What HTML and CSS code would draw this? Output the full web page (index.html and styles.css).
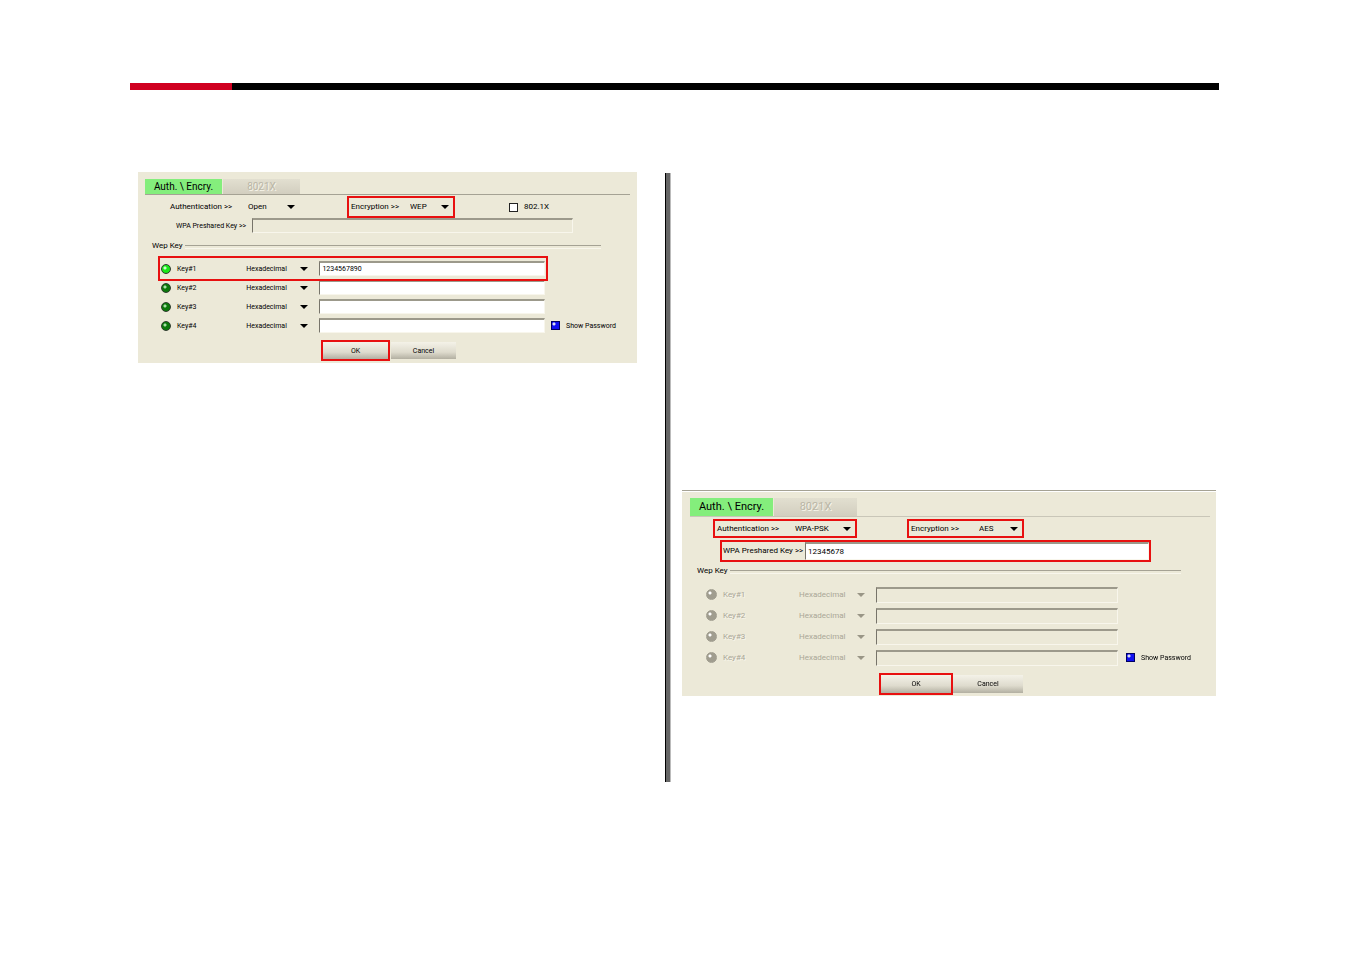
FILE: index.html
```html
<!DOCTYPE html>
<html lang="en">
<head>
  <meta charset="UTF-8" />
  <meta name="viewport" content="width=device-width, initial-scale=1" />
  <title>Auth. \ Encry.</title>
  <link rel="stylesheet" href="styles.css">
</head>
<body>
  <header class="rule"></header>

  <main class="columns">
    <form class="panel wep">
      <nav class="tabs">
        <button type="button" class="tab active">Auth. \ Encry.</button>
        <button type="button" class="tab" disabled>8021X</button>
      </nav>

      <div class="options">
        <div class="field auth">
          <label for="wep-auth">Authentication &gt;&gt;</label>
          <select id="wep-auth"><option>Open</option></select>
        </div>
        <div class="field enc marked">
          <label for="wep-enc">Encryption &gt;&gt;</label>
          <select id="wep-enc"><option>WEP</option></select>
        </div>
        <label class="check"><input type="checkbox"> 802.1X</label>
      </div>

      <div class="psk-row">
        <label for="wep-psk">WPA Preshared Key &gt;&gt;</label>
        <input type="text" id="wep-psk" disabled>
      </div>

      <fieldset>
        <legend>Wep Key</legend>
        <div class="keys">
          <div class="key-list">
            <div class="key marked">
              <label><input type="radio" name="wep-key" checked> Key#1</label>
              <select aria-label="Key 1 format"><option>Hexadecimal</option></select>
              <input type="text" aria-label="Key 1" value="1234567890">
            </div>
            <div class="key">
              <label><input type="radio" name="wep-key"> Key#2</label>
              <select aria-label="Key 2 format"><option>Hexadecimal</option></select>
              <input type="text" aria-label="Key 2">
            </div>
            <div class="key">
              <label><input type="radio" name="wep-key"> Key#3</label>
              <select aria-label="Key 3 format"><option>Hexadecimal</option></select>
              <input type="text" aria-label="Key 3">
            </div>
            <div class="key">
              <label><input type="radio" name="wep-key"> Key#4</label>
              <select aria-label="Key 4 format"><option>Hexadecimal</option></select>
              <input type="text" aria-label="Key 4">
            </div>
          </div>
          <label class="check"><input type="checkbox" checked> Show Password</label>
        </div>
      </fieldset>

      <div class="actions">
        <button type="button" class="marked">OK</button>
        <button type="button">Cancel</button>
      </div>
    </form>

    <div class="divider"></div>

    <form class="panel wpa">
      <nav class="tabs">
        <button type="button" class="tab active">Auth. \ Encry.</button>
        <button type="button" class="tab" disabled>8021X</button>
      </nav>

      <div class="options">
        <div class="field auth marked">
          <label for="wpa-auth">Authentication &gt;&gt;</label>
          <select id="wpa-auth"><option>WPA-PSK</option></select>
        </div>
        <div class="field enc marked">
          <label for="wpa-enc">Encryption &gt;&gt;</label>
          <select id="wpa-enc"><option>AES</option></select>
        </div>
      </div>

      <div class="psk-row marked">
        <label for="wpa-psk">WPA Preshared Key &gt;&gt;</label>
        <input type="text" id="wpa-psk" value="12345678" autofocus>
      </div>

      <fieldset>
        <legend>Wep Key</legend>
        <div class="keys">
          <div class="key-list">
            <div class="key off">
              <label><input type="radio" name="wpa-key" disabled> Key#1</label>
              <select aria-label="Key 1 format" disabled><option>Hexadecimal</option></select>
              <input type="text" aria-label="Key 1" disabled>
            </div>
            <div class="key off">
              <label><input type="radio" name="wpa-key" disabled> Key#2</label>
              <select aria-label="Key 2 format" disabled><option>Hexadecimal</option></select>
              <input type="text" aria-label="Key 2" disabled>
            </div>
            <div class="key off">
              <label><input type="radio" name="wpa-key" disabled> Key#3</label>
              <select aria-label="Key 3 format" disabled><option>Hexadecimal</option></select>
              <input type="text" aria-label="Key 3" disabled>
            </div>
            <div class="key off">
              <label><input type="radio" name="wpa-key" disabled> Key#4</label>
              <select aria-label="Key 4 format" disabled><option>Hexadecimal</option></select>
              <input type="text" aria-label="Key 4" disabled>
            </div>
          </div>
          <label class="check"><input type="checkbox" checked> Show Password</label>
        </div>
      </fieldset>

      <div class="actions">
        <button type="button" class="marked">OK</button>
        <button type="button">Cancel</button>
      </div>
    </form>
  </main>
</body>
</html>
```
FILE: styles.css
```css
* {
  margin: 0;
  padding: 0;
  box-sizing: border-box;
}

body {
  background: #fff;
  color: #000;
  font-family: Roboto, "Liberation Sans", sans-serif;
  padding: 83px 131px 0 130px;
}

.rule {
  height: 7px;
  background: linear-gradient(to right, #d00020 102px, #000 102px);
}

.columns {
  display: grid;
  grid-template-columns: 499fr 34px 545fr;
  align-items: start;
  padding: 82px 3px 0 8px;
}

.divider {
  width: 6px;
  height: 609px;
  margin: 1px 0 0 28px;
  background: #666;
  border-left: 1px solid #000;
  border-right: 1px solid #bbb;
}

.panel {
  background: #ece9d8;
  padding: 7px 7px 4px;
  font-size: 8px;
  line-height: 10px;
}

.panel input,
.panel select,
.panel button {
  font: inherit;
  color: inherit;
  border-radius: 0;
}

.marked {
  outline: 2px solid #e81010;
}

/* tabs */
.tabs {
  display: flex;
  gap: 1px;
  border-bottom: 1px solid #a5a294;
}

.panel .tab {
  width: 77px;
  height: 15px;
  border: 0;
  font-size: 10px;
  line-height: 14px;
  background: linear-gradient(#e2dfd0, #d2cebf);
  color: #bab6a6;
  text-shadow: 1px 1px 0 #f7f5ea;
}

.panel .tab.active {
  background: #84ee7c;
  color: #000;
  text-shadow: none;
}

/* authentication / encryption row */
.options {
  display: grid;
  grid-template-columns: 131fr 104fr 127fr;
  column-gap: 50px;
  height: 18px;
  margin: 3px 0 2px 23px;
}

.field {
  display: flex;
  align-items: center;
  justify-content: space-between;
  padding: 0 4px 0 2px;
}

.check {
  display: flex;
  align-items: center;
  gap: 6px;
  padding-left: 6px;
  white-space: nowrap;
}

select {
  appearance: none;
  border: 0;
  height: 12px;
  background: url("data:image/svg+xml,%3Csvg xmlns='http://www.w3.org/2000/svg' width='8' height='4'%3E%3Cpath d='M0 0h8L4 4z' fill='%23000'/%3E%3C/svg%3E") no-repeat right center;
}

select:disabled {
  opacity: 1;
  background-image: url("data:image/svg+xml,%3Csvg xmlns='http://www.w3.org/2000/svg' width='8' height='4'%3E%3Cpath d='M0 0h8L4 4z' fill='%23999686'/%3E%3C/svg%3E");
}

.auth select {
  width: 47px;
}

.enc select {
  width: 39px;
}

input[type="text"] {
  width: 100%;
  min-width: 0;
  height: 15px;
  padding: 0 2px;
  background: #fff;
  border: 1px solid #f8f6ec;
  border-top: 2px solid #9c998b;
  border-left: 1px solid #77746a;
  outline: none;
}

input[type="text"]:disabled {
  background: #ece9d8;
}

input[type="checkbox"],
input[type="radio"] {
  appearance: none;
  flex: none;
}

input[type="checkbox"] {
  width: 9px;
  height: 9px;
  background: #fff;
  border: 1px solid #222;
}

input[type="checkbox"]:checked {
  background: radial-gradient(circle at 2px 2px, #dde 0 1px, #1010f0 2px);
  border-color: #000060;
}

.panel input[type="radio"] {
  width: 10px;
  height: 10px;
  border: 1px solid #2c3c2c;
  border-radius: 50%;
  background: radial-gradient(circle at 3px 3px, #a8e0a8 0 1px, #0c780c 2px);
}

.panel input[type="radio"]:checked {
  background: radial-gradient(circle at 3px 3px, #c8ffc8 0 1px, #18e818 2px);
}

.panel input[type="radio"]:disabled {
  border-color: #a09d8f;
  background: radial-gradient(circle at 3px 3px, #fff 0 1px, #a09d8f 2px);
}

.psk-row {
  display: flex;
  align-items: center;
  margin: 0 57px 0 29px;
}

.psk-row label {
  flex: none;
  width: 78px;
  padding-left: 2px;
  font-size: 7px;
  white-space: nowrap;
}

/* wep keys */
fieldset {
  border: 0;
  margin-top: 8px;
}

legend {
  display: flex;
  align-items: center;
  gap: 2px;
  width: calc(100% - 36px);
  margin-left: 7px;
}

legend::after {
  content: "";
  flex: 1;
  height: 2px;
  margin-top: 2px;
  border-top: 1px solid #a5a294;
  border-bottom: 1px solid #f8f6ec;
}

.keys {
  display: grid;
  grid-template-columns: 384fr 85fr;
  align-items: end;
  padding: 8px 0 0 16px;
  font-size: 7px;
}

.key {
  display: grid;
  grid-template-columns: 85fr 62fr 236fr;
  align-items: center;
  height: 19px;
}

.key label {
  display: flex;
  align-items: center;
  gap: 6px;
}

.key input[type="text"] {
  width: auto;
  margin-left: 11px;
}

.key.marked {
  outline-offset: 1px;
}

.key.off {
  color: #aaa797;
  text-shadow: 1px 1px 0 #f8f6ec;
}

.keys .check {
  height: 19px;
}

.actions {
  display: flex;
  gap: 3px;
  margin: 7px 0 0 178px;
  font-size: 7px;
}

.actions button {
  width: 65px;
  height: 17px;
  border: 0;
  background: linear-gradient(#f4f2e8, #dedbcd 60%, #b2afa1);
}

/* right panel is drawn slightly larger */
.wpa {
  margin-top: 318px;
  margin-left: 11px;
  border-top: 1px solid #a5a294;
  box-shadow: inset 0 1px #fff;
  padding: 7px 6px 3px 8px;
}

.wpa .tabs {
  border-color: #c9c6b8;
}

.wpa .tab {
  width: 83px;
  height: 18px;
  font-size: 11px;
}

.wpa .options {
  grid-template-columns: 140fr 113fr 134fr;
  column-gap: 54px;
  height: 15px;
  margin: 4px 0 6px 25px;
}

.wpa .auth select {
  width: 56px;
}

.wpa .psk-row {
  margin: 0 61px 0 32px;
}

.wpa .psk-row label {
  width: 83px;
  padding-left: 1px;
  font-size: 8px;
}

.wpa .psk-row input {
  height: 18px;
}

.wpa fieldset {
  margin-top: 6px;
}

.wpa .keys {
  grid-template-columns: 412fr 92fr;
  font-size: 8px;
}

.wpa .key {
  grid-template-columns: 93fr 66fr 253fr;
  height: 21px;
}

.wpa .key input[type="radio"] {
  width: 11px;
  height: 11px;
}

.wpa .key input[type="text"] {
  height: 16px;
}

.wpa .keys .check {
  height: 21px;
  padding-left: 8px;
  font-size: 7px;
}

.wpa .actions {
  gap: 2px;
  margin-left: 191px;
}

.wpa .actions button {
  width: 70px;
  height: 18px;
}
```
